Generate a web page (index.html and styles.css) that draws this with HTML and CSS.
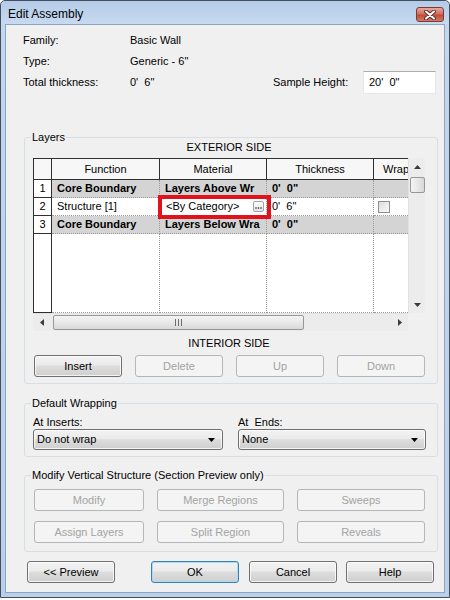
FILE: index.html
```html
<!DOCTYPE html>
<html lang="en">
<head>
<meta charset="utf-8">
<title>Edit Assembly</title>
<link rel="stylesheet" href="styles.css">
</head>
<body>
<div class="window">
  <div class="titlebar">
    <span class="title">Edit Assembly</span>
    <span class="close" aria-label="Close">
      <svg width="14" height="10" viewBox="0 0 14 10"><path d="M3 1.5 L11 8.5 M11 1.5 L3 8.5" stroke="#5a2622" stroke-width="3.8" stroke-linecap="round"/><path d="M3 1.5 L11 8.5 M11 1.5 L3 8.5" stroke="#fff" stroke-width="2.1" stroke-linecap="round"/></svg>
    </span>
  </div>
  <div class="client">
    <div class="info">
      <span>Family:</span><span class="span3">Basic Wall</span>
      <span>Type:</span><span class="span3">Generic - 6"</span>
      <span>Total thickness:</span><span>0'&nbsp; 6"</span><span>Sample Height:</span><div class="textbox">20'&nbsp; 0"</div>
    </div>

    <fieldset class="group g-layers">
      <legend>Layers</legend>
      <div class="layers-body">
        <div class="side side-top">EXTERIOR SIDE</div>
        <div class="table">
          <div class="grid">
            <div class="hc"></div>
            <div class="hc">Function</div>
            <div class="hc">Material</div>
            <div class="hc">Thickness</div>
            <div class="hc hc-wrap">Wrap</div>

            <div class="rn">1</div>
            <div class="dc core">Core Boundary</div>
            <div class="dc core">Layers Above Wr</div>
            <div class="dc core">0'&nbsp; 0"</div>
            <div class="dc core last"></div>

            <div class="rn">2</div>
            <div class="dc">Structure [1]</div>
            <div class="dc mat"><span>&lt;By Category&gt;</span><span class="ell"><svg width="9" height="9" viewBox="0 0 9 9"><circle cx="2" cy="6" r="0.8" fill="#222"/><circle cx="4.5" cy="6" r="0.8" fill="#222"/><circle cx="7" cy="6" r="0.8" fill="#222"/></svg></span><span class="hl"></span></div>
            <div class="dc">0'&nbsp; 6"</div>
            <div class="dc last"><span class="chk"></span></div>

            <div class="rn">3</div>
            <div class="dc core">Core Boundary</div>
            <div class="dc core">Layers Below Wra</div>
            <div class="dc core">0'&nbsp; 0"</div>
            <div class="dc core last"></div>

            <div class="rn fill"></div>
            <div class="dc"></div>
            <div class="dc"></div>
            <div class="dc"></div>
            <div class="dc last"></div>
          </div>
          <div class="vscroll">
            <div class="sbtn"><svg width="7" height="4" viewBox="0 0 7 4"><path d="M0 4 L3.5 0 L7 4Z" fill="#3c3c3c"/></svg></div>
            <div class="vthumb"></div>
            <div class="spacer"></div>
            <div class="sbtn"><svg width="7" height="4" viewBox="0 0 7 4"><path d="M0 0 L3.5 4 L7 0Z" fill="#3c3c3c"/></svg></div>
          </div>
          <div class="hscroll">
            <div class="sbtn"><svg width="4" height="7" viewBox="0 0 4 7"><path d="M4 0 L0 3.5 L4 7Z" fill="#3c3c3c"/></svg></div>
            <div class="hthumb"><svg width="7" height="7" viewBox="0 0 7 7"><path d="M0.5 0 V7 M3.5 0 V7 M6.5 0 V7" stroke="#6d6d6d" stroke-width="1"/></svg></div>
            <div class="spacer"></div>
            <div class="sbtn"><svg width="4" height="7" viewBox="0 0 4 7"><path d="M0 0 L4 3.5 L0 7Z" fill="#3c3c3c"/></svg></div>
          </div>
          <div class="corner"></div>
        </div>
        <div class="side side-bottom">INTERIOR SIDE</div>
        <div class="btnrow4">
          <button class="btn">Insert</button>
          <button class="btn disabled">Delete</button>
          <button class="btn disabled">Up</button>
          <button class="btn disabled">Down</button>
        </div>
      </div>
    </fieldset>

    <fieldset class="group g-wrap">
      <legend>Default Wrapping</legend>
      <div class="wrap-body">
        <div class="field">
          <div class="lbl">At Inserts:</div>
          <div class="combo"><span>Do not wrap</span><svg width="7" height="4" viewBox="0 0 7 4"><path d="M0 0 H7 L3.5 4Z" fill="#000"/></svg></div>
        </div>
        <div class="field">
          <div class="lbl">At&nbsp; Ends:</div>
          <div class="combo"><span>None</span><svg width="7" height="4" viewBox="0 0 7 4"><path d="M0 0 H7 L3.5 4Z" fill="#000"/></svg></div>
        </div>
      </div>
    </fieldset>

    <fieldset class="group g-modify">
      <legend>Modify Vertical Structure (Section Preview only)</legend>
      <div class="modify-body">
        <button class="btn disabled">Modify</button>
        <button class="btn disabled">Merge Regions</button>
        <button class="btn disabled">Sweeps</button>
        <button class="btn disabled">Assign Layers</button>
        <button class="btn disabled">Split Region</button>
        <button class="btn disabled">Reveals</button>
      </div>
    </fieldset>

    <div class="footer">
      <button class="btn">&lt;&lt; Preview</button>
      <button class="btn default ok">OK</button>
      <button class="btn cancel">Cancel</button>
      <button class="btn help">Help</button>
    </div>
  </div>
</div>
</body>
</html>
```

FILE: styles.css
```css
* { box-sizing: border-box; }
html, body { margin: 0; padding: 0; background: #fff; }
body {
  font-family: "Liberation Sans", Arial, sans-serif;
  font-size: 11px;
  line-height: 13px;
  color: #000;
}

.window {
  width: 450px;
  height: 598px;
  display: flex;
  flex-direction: column;
  background: linear-gradient(#c3d7ef, #bad0ea);
  border: 1px solid #434f5e;
  border-radius: 5px 5px 0 0;
}

.titlebar {
  height: 23px;
  display: flex;
  justify-content: space-between;
  align-items: flex-start;
  padding-left: 7px;
  background: linear-gradient(#b4cbe7, #c7daf0);
  border-radius: 5px 5px 0 0;
}
.title {
  font-size: 12px;
  line-height: 14px;
  margin-top: 6px;
}
.close {
  width: 28px;
  height: 15px;
  margin: 6px 5px 0 0;
  border: 1px solid #7b3b35;
  border-radius: 3px;
  background: linear-gradient(#e7a99d, #d36e60 45%, #c24a3a 55%, #d57a6a);
  display: flex;
  align-items: center;
  justify-content: center;
}

.client {
  flex: 1;
  margin: 0 4px 4px 4px;
  background: #f0f0f0;
  border: 1px solid #8ea4bf;
  display: flex;
  flex-direction: column;
}

/* info block */
.info {
  display: grid;
  grid-template-columns: 107px 143px 90px 73px;
  grid-template-rows: 21px 21px 21px;
  align-items: center;
  margin: 5px 0 0 17px;
}
.span3 { grid-column: span 3; }
.textbox {
  height: 23px;
  background: #fff;
  border: 1px solid #e2e8ee;
  border-top-color: #abadb3;
  padding-left: 5px;
  display: flex;
  align-items: center;
}

/* group boxes */
.group {
  margin: 0 6px 0 18px;
  padding: 0;
  border: 1px solid #d5dfe5;
  border-radius: 3px;
  min-width: 0;
}
.group legend {
  margin-left: 6px;
  padding: 0 1px;
  line-height: 14px;
}
.g-layers { margin-top: 37px; }
.g-wrap { margin-top: 12px; }
.g-modify { margin-top: 11px; }

.layers-body {
  padding: 0 12px 6px 8px;
  display: flex;
  flex-direction: column;
}
.side {
  text-align: center;
  line-height: 13px;
}
.side-top { margin-top: -3px; }
.side-bottom { margin-top: 6px; }

/* grid table */
.table {
  margin-top: 4px;
  display: grid;
  grid-template-columns: 375px 17px;
  grid-template-rows: 155px 18px;
}
.grid {
  display: grid;
  grid-template-columns: 18px 108px 107px 107px 1fr;
  grid-template-rows: 21px 18px 18px 18px 1fr;
  border-top: 1px solid #2f2f2f;
  border-left: 1px solid #2f2f2f;
  background: #fff;
  overflow: hidden;
}
.hc {
  background: #f7f7f7;
  border-right: 1px solid #2f2f2f;
  border-bottom: 1px solid #2f2f2f;
  text-align: center;
  line-height: 20px;
  white-space: nowrap;
  overflow: hidden;
}
.hc-wrap {
  text-align: left;
  padding-left: 9px;
  border-right: none;
}
.rn {
  background: #fff;
  border-right: 1px solid #2f2f2f;
  border-bottom: 1px solid #2f2f2f;
  text-align: center;
  line-height: 17px;
}
.dc {
  background: #fff;
  border-right: 1px dotted #9a9a9a;
  border-bottom: 1px dotted #9a9a9a;
  padding-left: 5px;
  line-height: 17px;
  white-space: nowrap;
  overflow: hidden;
}
.dc.core {
  background: #d4d4d4;
  font-weight: bold;
}
.dc.last { border-right: none; padding-left: 4px; }
.dc.mat {
  position: relative;
  overflow: visible;
  display: flex;
  align-items: center;
  justify-content: space-between;
  padding: 0 2px 0 6px;
}
.ell {
  width: 11px;
  height: 11px;
  border: 1px solid #9da4ab;
  border-radius: 2px;
  background: linear-gradient(#fdfdfd, #e4e4e4);
  display: flex;
  align-items: center;
  justify-content: center;
}
.hl {
  position: absolute;
  left: -2px;
  top: -3px;
  right: -5px;
  bottom: -4px;
  border: 4px solid #e2121c;
}
.chk {
  display: block;
  width: 12px;
  height: 12px;
  margin-top: 3px;
  border: 1px solid #8f8f8f;
  background: linear-gradient(135deg, #dcdcdc, #fbfbfb);
}

.vscroll {
  background: #ececec;
  border-left: 1px solid #e2e2e2;
  display: flex;
  flex-direction: column;
  align-items: center;
}
.hscroll {
  background: #ececec;
  border-top: 1px solid #e2e2e2;
  display: flex;
  align-items: center;
}
.sbtn {
  width: 17px;
  height: 17px;
  flex: none;
  display: flex;
  align-items: center;
  justify-content: center;
}
.spacer { flex: 1; }
.vthumb {
  width: 15px;
  height: 16px;
  margin-top: 2px;
  border: 1px solid #979797;
  border-radius: 2px;
  background: linear-gradient(to right, #f4f4f4, #e8e8e8 50%, #d8d8d8);
}
.hthumb {
  width: 251px;
  height: 15px;
  margin-left: 3px;
  border: 1px solid #979797;
  border-radius: 2px;
  background: linear-gradient(#f4f4f4, #e8e8e8 50%, #d8d8d8);
  display: flex;
  align-items: center;
  justify-content: center;
}
.corner { background: #f0f0f0; }

/* buttons */
.btn {
  font: inherit;
  margin: 0;
  padding: 0;
  height: 22px;
  border: 1px solid #707070;
  border-radius: 3px;
  color: #000;
  background: linear-gradient(#f2f2f2, #ebebeb 45%, #dddddd 50%, #cfcfcf);
  box-shadow: inset 0 0 0 1px rgba(255, 255, 255, 0.75);
  display: flex;
  align-items: center;
  justify-content: center;
}
.btn.disabled {
  border-color: #b3b7ba;
  background: #f4f4f4;
  color: #a3a3a3;
  box-shadow: none;
}
.btn.default {
  border-color: #3c7fb1;
  box-shadow: inset 0 0 0 1px #a8dcf6;
}

.btnrow4 {
  margin-top: 5px;
  margin-left: 1px;
  display: grid;
  grid-template-columns: repeat(4, 88px);
  column-gap: 13px;
}

/* default wrapping */
.wrap-body {
  padding: 6px 11px 6px 8px;
  display: grid;
  grid-template-columns: 190px 188px;
  column-gap: 15px;
}
.lbl { line-height: 13px; }
.combo {
  height: 21px;
  border: 1px solid #707070;
  border-radius: 3px;
  background: linear-gradient(#f2f2f2, #ebebeb 45%, #dddddd 50%, #cfcfcf);
  box-shadow: inset 0 0 0 1px rgba(255, 255, 255, 0.75);
  display: flex;
  align-items: center;
  justify-content: space-between;
  padding: 0 7px 0 3px;
}

/* modify vertical structure */
.modify-body {
  padding: 7px 12px 8px 9px;
  display: grid;
  grid-template-columns: 110px 127px 128px;
  column-gap: 13px;
  row-gap: 10px;
}

/* footer */
.footer {
  margin-top: 9px;
  padding-left: 21px;
  display: flex;
}
.footer .btn { width: 88px; }
.footer .ok { margin-left: 36px; }
.footer .cancel { margin-left: 10px; }
.footer .help { margin-left: 9px; }
```
